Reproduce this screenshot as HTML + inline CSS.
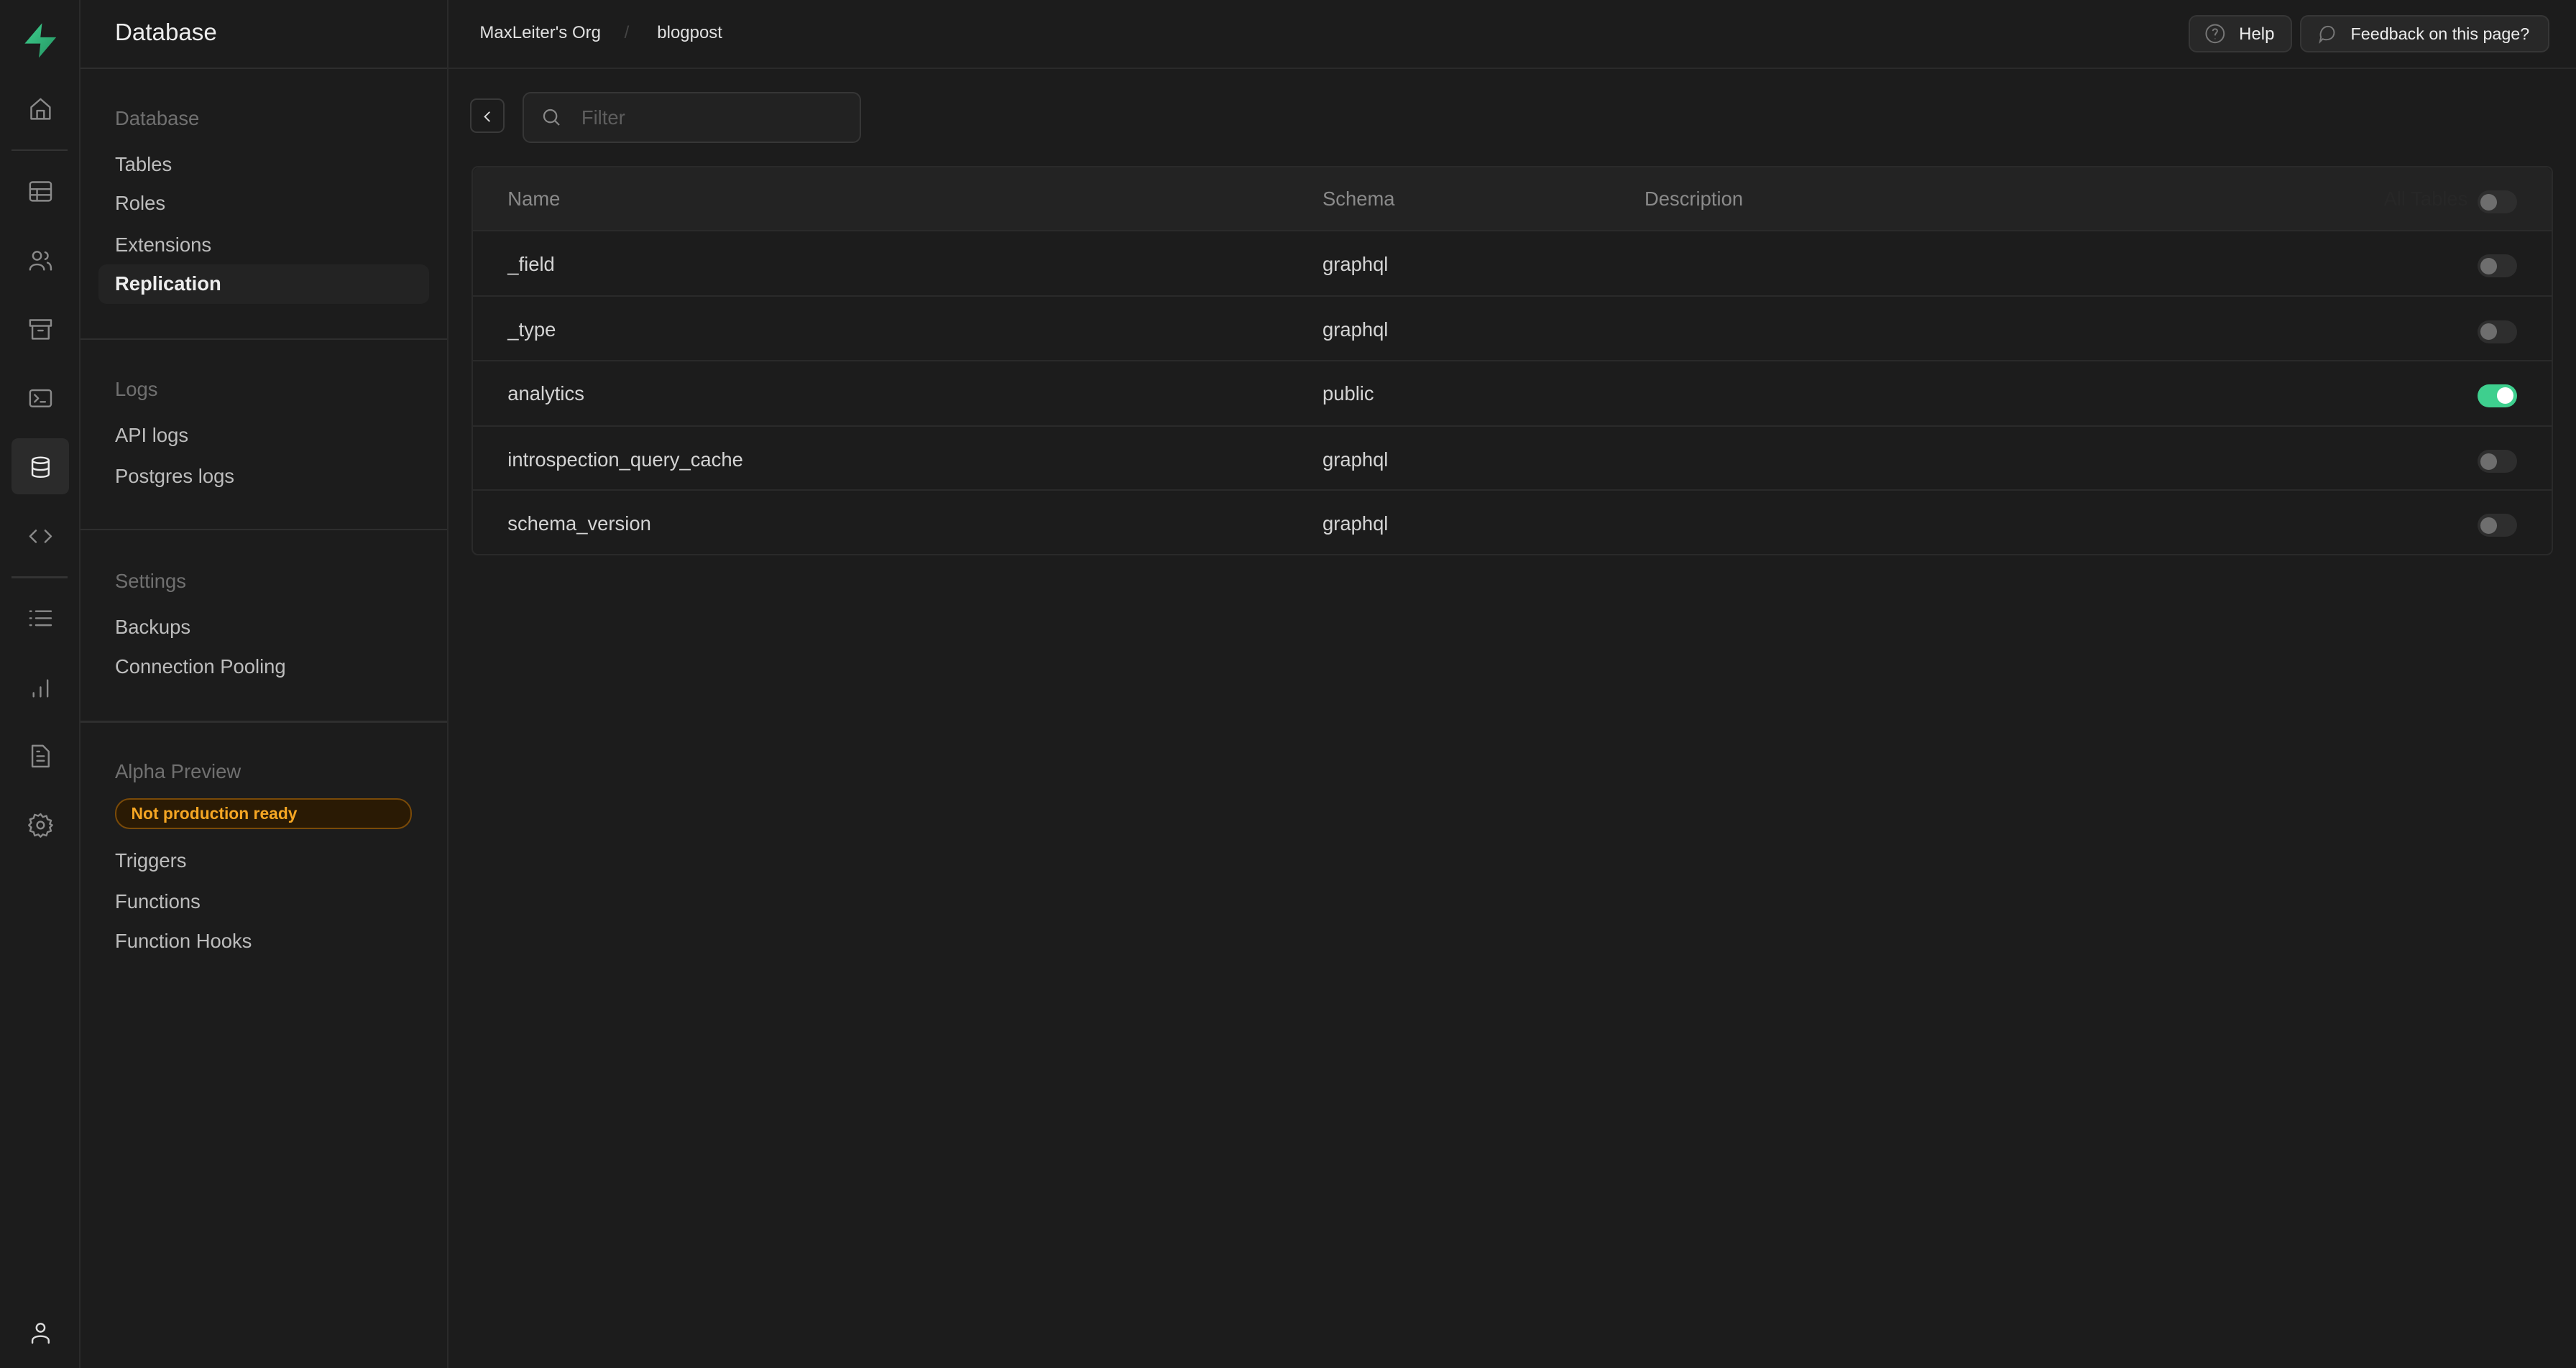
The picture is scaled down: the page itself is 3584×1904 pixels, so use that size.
<!DOCTYPE html>
<html><head><meta charset="utf-8"><style>
html,body{margin:0;padding:0;background:#1c1c1c;overflow:hidden}
body{width:3584px;height:1904px}
#r{zoom:2.285714;width:1568px;height:833px;position:relative;font-family:"Liberation Sans",sans-serif;color:#ededed;background:#1c1c1c}
.a{position:absolute}
.rail{left:0;top:0;width:48px;height:833px;border-right:1px solid #2a2a2a}
.ic{position:absolute;left:16px;width:17px;height:17px;fill:none;stroke:#8a8a8a;stroke-width:1.5;stroke-linecap:round;stroke-linejoin:round}
.side{left:49px;top:0;width:223px;height:833px;border-right:1px solid #2a2a2a}
.sep{position:absolute;left:0;width:223px;height:1px;background:#2e2e2e}
.t{position:absolute;left:21px;font-size:12px;color:#bdbdbd;white-space:nowrap;margin-top:1px}
.h{color:#707070}
.tog{position:absolute;left:1508px;width:24px;height:14px;border-radius:7px;background:#2e2e2e}
.tog:after{content:"";position:absolute;left:2px;top:2px;width:10px;height:10px;border-radius:5px;background:#6e6e6e}
.tog.on{background:#3ecf8e}.tog.on:after{left:12px;background:#fff}
.row{position:absolute;left:287px;width:1267px;height:39px;border-top:1px solid #2a2a2a}
.c{position:absolute;top:13px;font-size:12px;color:#d4d4d4;white-space:nowrap}
.btn{position:absolute;top:9px;height:23px;border:1px solid #363636;background:#282828;border-radius:5px;font-size:10.5px;color:#ededed;box-sizing:border-box}
</style></head><body><div id="r">
<div class="a rail">
<svg class="a" style="left:13px;top:13px" width="23" height="23" viewBox="0 0 24 24"><defs><linearGradient id="g" x1="0" y1="0" x2="1" y2="1"><stop offset="0" stop-color="#3ecf8e"/><stop offset="1" stop-color="#249361"/></linearGradient></defs><path d="M13 1 L2 14 H12 L11 23 L22 10 H12 Z" fill="url(#g)"/></svg>
<svg class="ic" style="top:58px" viewBox="0 0 24 24"><path d="M4 10 L12 3 L20 10 V20 H4 Z M9 20 V13 H15 V20"/></svg>
<div class="a" style="left:7px;top:91px;width:34px;height:1px;background:#333"></div>
<svg class="ic" style="top:108px" viewBox="0 0 24 24"><rect x="3" y="4" width="18" height="16" rx="2"/><path d="M3 10H21M3 15H21M9 10V20"/></svg>
<svg class="ic" style="top:150px" viewBox="0 0 24 24"><circle cx="9" cy="8" r="3.5"/><path d="M3 20 C3 14 15 14 15 20 M16 5 C19 6 19 10 16 11 M18 14 C21 15 21 18 21 20"/></svg>
<svg class="ic" style="top:192px" viewBox="0 0 24 24"><rect x="3" y="4" width="18" height="5"/><path d="M5 9 V20 H19 V9 M10 13 H14"/></svg>
<svg class="ic" style="top:234px" viewBox="0 0 24 24"><rect x="3" y="5" width="18" height="14" rx="2"/><path d="M7 9 L10 12 L7 15 M12 15 H16"/></svg>
<div class="a" style="left:7px;top:267px;width:35px;height:34px;border-radius:4px;background:#2b2b2b"></div>
<svg class="ic" style="top:276px;stroke:#ededed" viewBox="0 0 24 24"><ellipse cx="12" cy="6" rx="7" ry="2.5"/><path d="M5 6 V18 C5 21 19 21 19 18 V6 M5 12 C5 15 19 15 19 12"/></svg>
<svg class="ic" style="top:318px" viewBox="0 0 24 24"><path d="M8 7 L3 12 L8 17 M16 7 L21 12 L16 17"/></svg>
<div class="a" style="left:7px;top:351px;width:34px;height:1px;background:#333"></div>
<svg class="ic" style="top:368px" viewBox="0 0 24 24"><path d="M8 6H21M8 12H21M8 18H21M3 6H4M3 12H4M3 18H4"/></svg>
<svg class="ic" style="top:410px" viewBox="0 0 24 24"><path d="M6 20V17M12 20V12M18 20V6"/></svg>
<svg class="ic" style="top:452px" viewBox="0 0 24 24"><path d="M5 3 H14 L19 8 V21 H5 Z M9 12 H15 M9 16 H15 M9 8 H11"/></svg>
<svg class="ic" style="top:494px" viewBox="0 0 24 24"><circle cx="12" cy="12" r="3"/><path d="M12 2.5 L14 5 L17 4 L18 7 L21 8 L20 11 L22 12 L20 14 L21 17 L18 18 L17 21 L14 20 L12 22 L10 20 L7 21 L6 18 L3 17 L4 14 L2 12 L4 10 L3 7 L6 6 L7 3 L10 4 Z"/></svg>
<svg class="ic" style="top:803px;stroke:#dcdcdc" viewBox="0 0 24 24"><circle cx="12" cy="8" r="3.5"/><path d="M5 21 V19 C5 14 19 14 19 19 V21"/></svg>
</div>
<div class="a side">
<div class="a" style="left:21px;top:12px;font-size:14.5px;color:#ededed">Database</div>
<div class="sep" style="top:41px"></div>
<div class="t h" style="top:64px">Database</div>
<div class="t" style="top:92px">Tables</div>
<div class="t" style="top:116px">Roles</div>
<div class="t" style="top:141px">Extensions</div>
<div class="a" style="left:11px;top:161px;width:201px;height:24px;border-radius:5px;background:#232323"></div>
<div class="t" style="top:165px;color:#ededed;font-weight:bold">Replication</div>
<div class="sep" style="top:206px"></div>
<div class="t h" style="top:229px">Logs</div>
<div class="t" style="top:257px">API logs</div>
<div class="t" style="top:282px">Postgres logs</div>
<div class="sep" style="top:322px"></div>
<div class="t h" style="top:346px">Settings</div>
<div class="t" style="top:374px">Backups</div>
<div class="t" style="top:398px">Connection Pooling</div>
<div class="sep" style="top:439px"></div>
<div class="t h" style="top:462px">Alpha Preview</div>
<div class="a" style="left:21px;top:486px;width:179px;height:17px;border:1px solid #7a4a08;border-radius:9px;background:#2a1a04;color:#f5a623;font-size:10px;font-weight:bold;line-height:17px;box-sizing:content-box"><span style="padding-left:9px">Not production ready</span></div>
<div class="t" style="top:516px">Triggers</div>
<div class="t" style="top:541px">Functions</div>
<div class="t" style="top:565px">Function Hooks</div>
</div>
<div class="a" style="left:273px;top:41px;width:1295px;height:1px;background:#2a2a2a"></div>
<div class="a" style="left:292px;top:14px;font-size:10.5px;color:#e0e0e0">MaxLeiter's Org</div>
<div class="a" style="left:380px;top:14px;font-size:10.5px;color:#444">/</div>
<div class="a" style="left:400px;top:14px;font-size:10.5px;color:#e0e0e0">blogpost</div>
<div class="btn" style="left:1332px;width:63px"><svg class="a" style="left:9px;top:4px" width="13" height="13" viewBox="0 0 24 24" fill="none" stroke="#777" stroke-width="1.6"><circle cx="12" cy="12" r="10"/><path d="M9.5 9 C9.5 6 14.5 6 14.5 9 C14.5 11 12 11 12 14 M12 17.5V18"/></svg><span class="a" style="left:30px;top:5px">Help</span></div>
<div class="btn" style="left:1400px;width:152px"><svg class="a" style="left:9px;top:4px" width="13" height="13" viewBox="0 0 24 24" fill="none" stroke="#777" stroke-width="1.6"><path d="M4 21 L5 16 C3 11 7 3 14 4 C21 5 22 15 15 18 C12 19 9 19 7 18 Z"/></svg><span class="a" style="left:30px;top:5px;font-size:10.2px">Feedback on this page?</span></div>
<div class="a" style="left:286px;top:60px;width:21px;height:21px;border:1px solid #3a3a3a;border-radius:4px;box-sizing:border-box"><svg class="a" style="left:5px;top:5px" width="10" height="10" viewBox="0 0 24 24" fill="none" stroke="#ddd" stroke-width="2"><path d="M15 5 L8 12 L15 19"/></svg></div>
<div class="a" style="left:318px;top:56px;width:206px;height:31px;border:1px solid #363636;border-radius:5px;background:#222;box-sizing:border-box"><svg class="a" style="left:10px;top:8px" width="13" height="13" viewBox="0 0 24 24" fill="none" stroke="#888" stroke-width="1.8"><circle cx="11" cy="11" r="7"/><path d="M16 16 L21 21"/></svg><span class="a" style="left:35px;top:8px;font-size:12px;color:#5e5e5e">Filter</span></div>
<div class="a" style="left:287px;top:101px;width:1267px;height:237px;border:1px solid #2a2a2a;border-radius:4px;box-sizing:border-box"></div>
<div class="a" style="left:288px;top:102px;width:1265px;height:38px;background:#232323;border-radius:4px 4px 0 0"></div>
<div class="c" style="left:309px;top:114px;color:#8a8a8a">Name</div>
<div class="c" style="left:805px;top:114px;color:#8a8a8a">Schema</div>
<div class="c" style="left:1001px;top:114px;color:#8a8a8a">Description</div>
<div class="c" style="left:1451px;top:114px;color:#272727">All Tables</div>
<div class="tog" style="top:116px"></div>
<div class="row" style="top:140px"><div class="c" style="left:22px">_field</div><div class="c" style="left:518px">graphql</div></div>
<div class="row" style="top:180px"><div class="c" style="left:22px">_type</div><div class="c" style="left:518px">graphql</div></div>
<div class="row" style="top:219px"><div class="c" style="left:22px">analytics</div><div class="c" style="left:518px">public</div></div>
<div class="row" style="top:259px"><div class="c" style="left:22px">introspection_query_cache</div><div class="c" style="left:518px">graphql</div></div>
<div class="row" style="top:298px"><div class="c" style="left:22px">schema_version</div><div class="c" style="left:518px">graphql</div></div>
<div class="tog" style="top:155px"></div>
<div class="tog" style="top:195px"></div>
<div class="tog on" style="top:234px"></div>
<div class="tog" style="top:274px"></div>
<div class="tog" style="top:313px"></div>
</div></body></html>
